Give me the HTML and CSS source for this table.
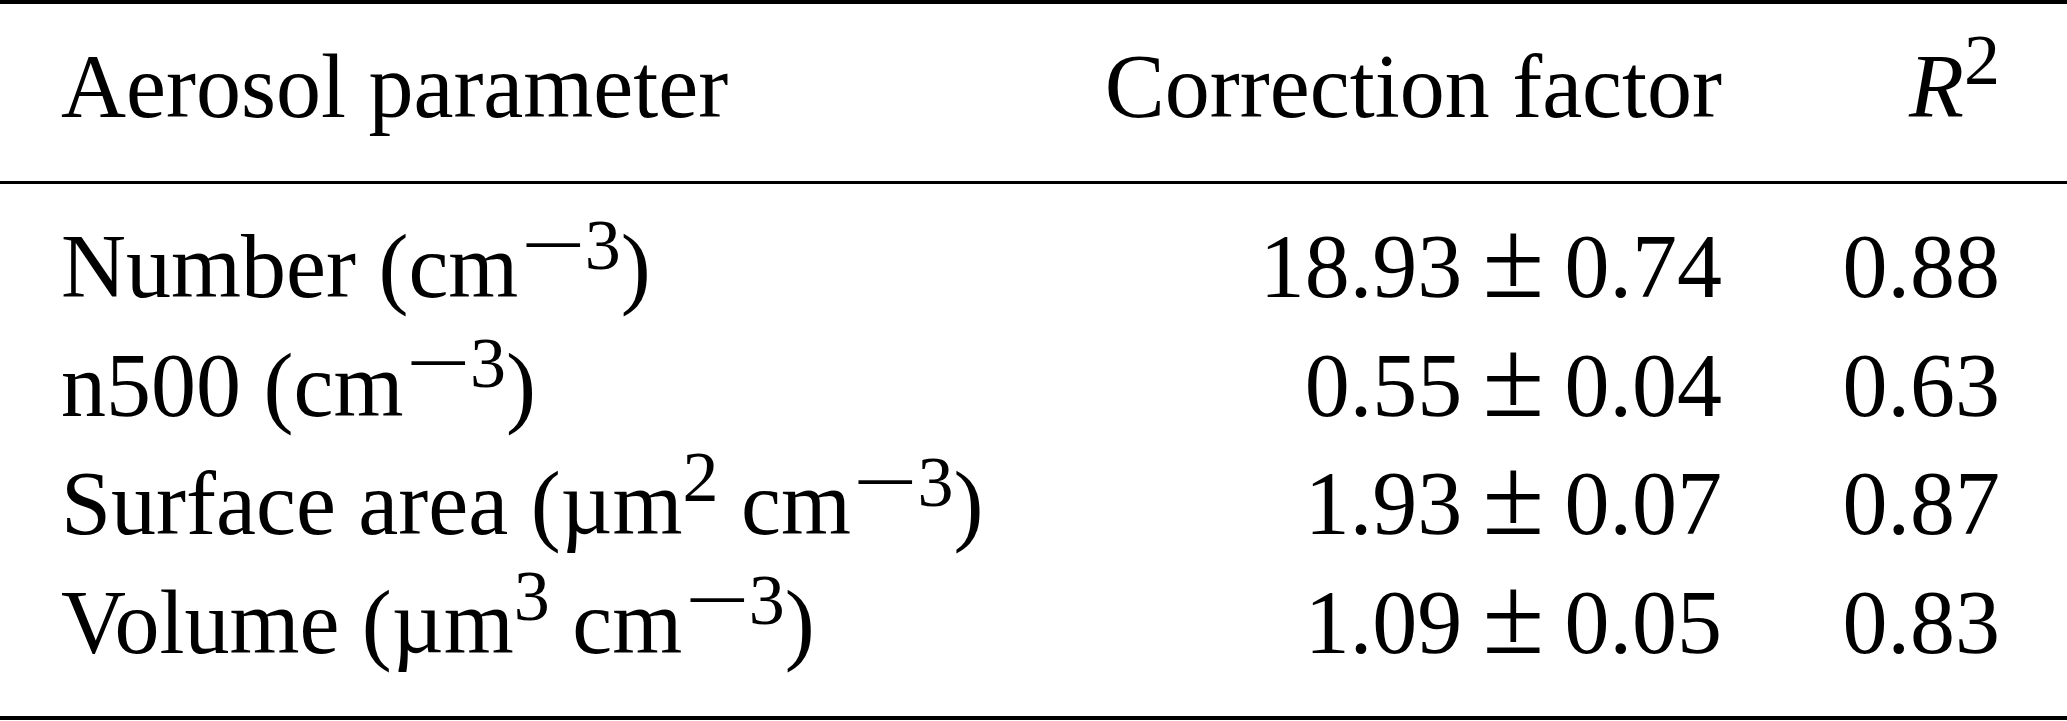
FILE: index.html
```html
<!DOCTYPE html>
<html lang="en">
<head>
    <meta charset="UTF-8">
    <meta name="viewport" content="width=device-width, initial-scale=1.0">
    <title>Aerosol correction factors</title>
    <link rel="stylesheet" href="styles.css">
</head>
<body>
    <table class="coeffs">
        <colgroup>
            <col class="col-name">
            <col class="col-factor">
            <col class="col-r2">
        </colgroup>
        <thead>
            <tr>
                <th class="name">Aerosol parameter</th>
                <th class="num">Correction factor</th>
                <th class="num r2"><i>R</i><span class="sup">2</span></th>
            </tr>
        </thead>
        <tbody>
            <tr class="first">
                <td class="name">Number (cm<span class="sup neg"><span class="minus">−</span>3</span>)</td>
                <td class="num">18.93<span class="pm">±</span>0.74</td>
                <td class="num r2">0.88</td>
            </tr>
            <tr>
                <td class="name">n500 (cm<span class="sup neg"><span class="minus">−</span>3</span>)</td>
                <td class="num">0.55<span class="pm">±</span>0.04</td>
                <td class="num r2">0.63</td>
            </tr>
            <tr>
                <td class="name">Surface area (µm<span class="sup">2</span> cm<span class="sup neg"><span class="minus">−</span>3</span>)</td>
                <td class="num">1.93<span class="pm">±</span>0.07</td>
                <td class="num r2">0.87</td>
            </tr>
            <tr class="last">
                <td class="name">Volume (µm<span class="sup">3</span> cm<span class="sup neg"><span class="minus">−</span>3</span>)</td>
                <td class="num">1.09<span class="pm">±</span>0.05</td>
                <td class="num r2">0.83</td>
            </tr>
        </tbody>
    </table>
</body>
</html>
```

FILE: styles.css
```css
body {
    margin: 0;
    background-color: #fff;
    color: #000;
    font-family: "Liberation Serif", "Times New Roman", serif;
}
.coeffs {
    width: 2067px;
    table-layout: fixed;
    border-collapse: separate;
    border-spacing: 0;
    font-size: 90px;
    line-height: 118.5px;
}
.col-name {
    width: 1100px;
}
.col-factor {
    width: 622px;
}
.col-r2 {
    width: 345px;
}
.coeffs th,
.coeffs td {
    padding: 0;
    font-weight: normal;
    white-space: nowrap;
}
.coeffs thead th {
    border-top: 4px solid #000;
    border-bottom: 3px solid #000;
    padding-top: 24px;
    padding-bottom: 34.5px;
}
.coeffs .first td {
    padding-top: 24.4px;
}
.coeffs .last td {
    padding-bottom: 33.6px;
    border-bottom: 4px solid #000;
}
.name {
    text-align: left;
    padding-left: 61px !important;
}
.num {
    text-align: right;
}
.r2 {
    padding-right: 67px !important;
}
.sup {
    font-size: 0.8em;
    line-height: 0;
    vertical-align: 0.46em;
}
.sup.neg {
    vertical-align: 0.4em;
}
.minus {
    display: inline-block;
    transform: scaleX(1.6);
    margin: 0 0.16em 0 0.2em;
}
.pm {
    font-size: 1.25em;
    line-height: 0;
    margin: 0 0.18em;
}
```
